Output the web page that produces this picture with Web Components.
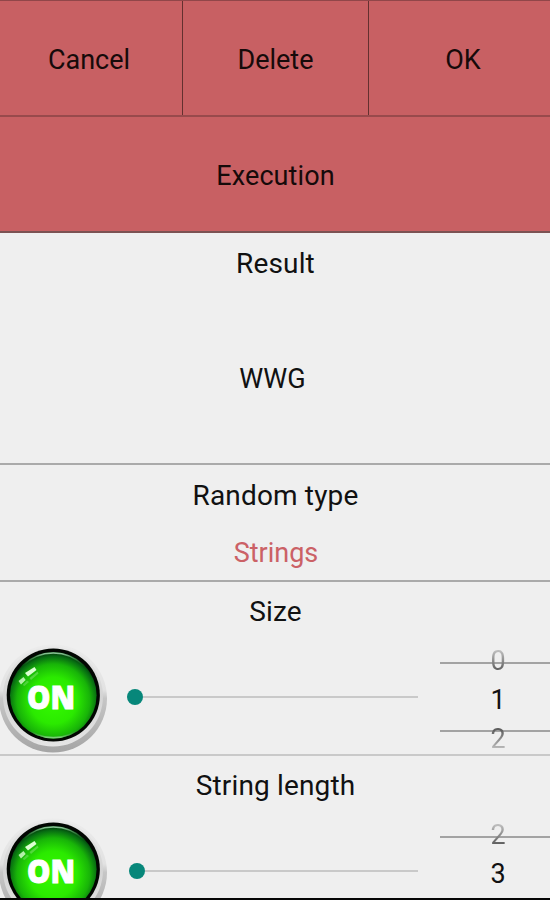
<!DOCTYPE html>
<html lang="en">
<head>
<meta charset="utf-8">
<title>Random</title>
<style>
  html, body { margin: 0; height: 100%; overflow: hidden; }
  body { background: #efefef; font-family: Roboto, sans-serif; font-size: 27px; color: #111; }
</style>
</head>
<body>
<random-screen>
  <tool-bar>
    <bar-button>Cancel</bar-button>
    <bar-button>Delete</bar-button>
    <bar-button>OK</bar-button>
  </tool-bar>
  <run-button>Execution</run-button>
  <text-section label="Result" style="--body-h:172px; --value-pad:4px 5px 0 0">WWG</text-section>
  <text-section label="Random type" style="--body-h:57px; --value:#cb6166; --value-pad:2px 0 0 2px">Strings</text-section>
  <range-section label="Size" thumb="0" values="0,1,2"></range-section>
  <range-section label="String length" thumb="2" values="2,3"></range-section>
</random-screen>

<script>
(() => {
  'use strict';

  const define = (name, html) => {
    customElements.define(name, class extends HTMLElement {
      constructor() {
        super();
        this.attachShadow({ mode: 'open' }).innerHTML = html(this);
      }
    });
  };

  define('random-screen', () => `
    <style>
      :host { display:flex; flex-direction:column; box-sizing:border-box; height:100vh;
              overflow:hidden; border-bottom:2px solid #050505; }
    </style>
    <slot></slot>`);

  define('tool-bar', () => `
    <style>
      :host { display:grid; grid-template-columns:183px 186px 1fr; box-sizing:border-box; flex:none;
              height:117px; background:#c86063; border-top:1px solid #914649; border-bottom:2px solid #984a4c; }
    </style>
    <slot></slot>`);

  define('bar-button', () => `
    <style>
      :host { display:flex; align-items:center; justify-content:center; box-sizing:border-box;
              padding-top:4px; border-right:1px solid #64302f; color:#160a0a; }
      :host(:first-child) { padding-right:4px; }
      :host(:last-child) { border-right:0; padding-left:7px; }
    </style>
    <slot></slot>`);

  define('run-button', () => `
    <style>
      :host { display:flex; align-items:center; justify-content:center; box-sizing:border-box; flex:none;
              height:116px; padding:4px 0 0 1px; background:#c86063; border-bottom:2px solid #7b5253;
              color:#160a0a; letter-spacing:.1px; }
    </style>
    <slot></slot>`);

  // titled block with one centered value
  define('text-section', (el) => `
    <style>
      :host { display:block; flex:none; border-bottom:2px solid #aaa; }
      .title, .value { display:flex; align-items:center; justify-content:center; box-sizing:border-box; }
      .title { height:58px; padding:3px 0 0 1px; font-size:28px; letter-spacing:.15px; }
      .value { height:var(--body-h); color:var(--value, inherit); padding:var(--value-pad, 0); }
    </style>
    <div class="title">${el.getAttribute('label')}</div>
    <div class="value"><slot></slot></div>`);

  define('range-section', (el) => `
    <style>
      :host { display:block; flex:none; height:172px; border-bottom:2px solid #c9c9c9; }
      .title { display:flex; align-items:center; justify-content:center; height:57px;
               padding:2px 0 0 1px; box-sizing:border-box; font-size:28px; letter-spacing:.15px; }
      .row { display:grid; grid-template-columns:118px 1fr 110px; column-gap:11px; height:115px; }
      seek-bar { margin-right:11px; }
    </style>
    <div class="title">${el.getAttribute('label')}</div>
    <div class="row">
      <on-switch></on-switch>
      <seek-bar thumb="${el.getAttribute('thumb')}"></seek-bar>
      <number-wheel values="${el.getAttribute('values')}"></number-wheel>
    </div>`);

  // glossy round button on a metal ring
  define('on-switch', () => `
    <style>
      :host { display:block; }
      svg { display:block; }
      text { font:800 32px "Open Sans", sans-serif; fill:#fff; stroke:#fff; stroke-width:.9px; }
    </style>
    <svg width="110" height="115" viewBox="0 0 110 115">
      <defs>
        <linearGradient id="ring" x1="0" y1="0" x2="0" y2="1">
          <stop offset="0" stop-color="#ececec"/><stop offset=".42" stop-color="#e2e2e2"/>
          <stop offset=".5" stop-color="#c6c6c6"/><stop offset="1" stop-color="#a5a5a5"/>
        </linearGradient>
        <linearGradient id="lip" x1="0" y1="0" x2="0" y2="1">
          <stop offset="0" stop-color="#e8e8e8"/><stop offset=".5" stop-color="#d4d4d4"/>
          <stop offset="1" stop-color="#e5e5e5"/>
        </linearGradient>
        <radialGradient id="green" cx=".5" cy=".56" r=".54">
          <stop offset="0" stop-color="#34fb00"/><stop offset=".5" stop-color="#2bea00"/>
          <stop offset=".78" stop-color="#18b408"/><stop offset=".94" stop-color="#076c12"/>
          <stop offset="1" stop-color="#03480c"/>
        </radialGradient>
        <linearGradient id="rim" x1="0" y1="0" x2="0" y2="1">
          <stop offset="0" stop-color="#8fc79b"/><stop offset=".16" stop-color="#26702f" stop-opacity="0"/>
          <stop offset=".9" stop-color="#26702f" stop-opacity="0"/><stop offset="1" stop-color="#7ccf79"/>
        </linearGradient>
      </defs>
      <circle cx="53" cy="59.5" r="54" fill="url(#ring)"/>
      <circle cx="53" cy="57.5" r="50" fill="url(#lip)"/>
      <circle cx="53.3" cy="56" r="46.6" fill="#020602"/>
      <circle cx="53.3" cy="56.3" r="43.3" fill="url(#green)"/>
      <circle cx="53.3" cy="56.3" r="42.3" fill="none" stroke="url(#rim)" stroke-width="1.6"/>
      <g fill="#dcffd2">
        <path d="M25 34 34.5 28 36.5 31 28 37.5Z"/>
        <path d="M18.5 42 23.5 38 25.7 41 21 45.5Z" opacity=".8"/>
        <path d="M29.5 39 37.5 32.5 38.5 34.5 31 41Z" opacity=".28"/>
        <path d="M22.5 46 27 41.5 29 43 24.5 47Z" opacity=".25"/>
      </g>
      <text x="27" y="69.6" textLength="48" lengthAdjust="spacingAndGlyphs">ON</text>
    </svg>`);

  define('seek-bar', (el) => `
    <style>
      :host { display:flex; align-items:center; height:116px;
              padding-left:${el.getAttribute('thumb') || 0}px; box-sizing:border-box; }
      .thumb { flex:none; width:16px; height:16px; margin-left:-2px; border-radius:50%; background:#07877a; }
      .track { flex:1; height:2px; background:#c9c9c9; }
    </style>
    <span class="thumb"></span><span class="track"></span>`);

  define('number-wheel', (el) => {
    const [prev, cur, next] = (el.getAttribute('values') || '').split(',');
    return `
    <style>
      :host { display:grid; grid-template-rows:39px 39px 39px; height:115px; box-sizing:border-box;
              position:relative; justify-items:center; align-items:center; padding:2px 0 0 6px; }
      span { position:relative; }
      .prev, .next { color:transparent; background-clip:text; -webkit-background-clip:text; }
      .prev { background-image:linear-gradient(#bbb 20%, #555 85%); }
      .next { background-image:linear-gradient(#555 15%, #bbb 80%); }
      i { position:absolute; left:0; right:0; height:2px; background:#a3a3a3; }
      i:first-of-type { top:23px; }
      i:last-of-type { top:91px; }
    </style>
    <i></i><i></i>
    <span class="prev">${prev}</span>
    <span>${cur}</span>
    ${next ? `<span class="next">${next}</span>` : ''}`;
  });
})();
</script>
</body>
</html>
